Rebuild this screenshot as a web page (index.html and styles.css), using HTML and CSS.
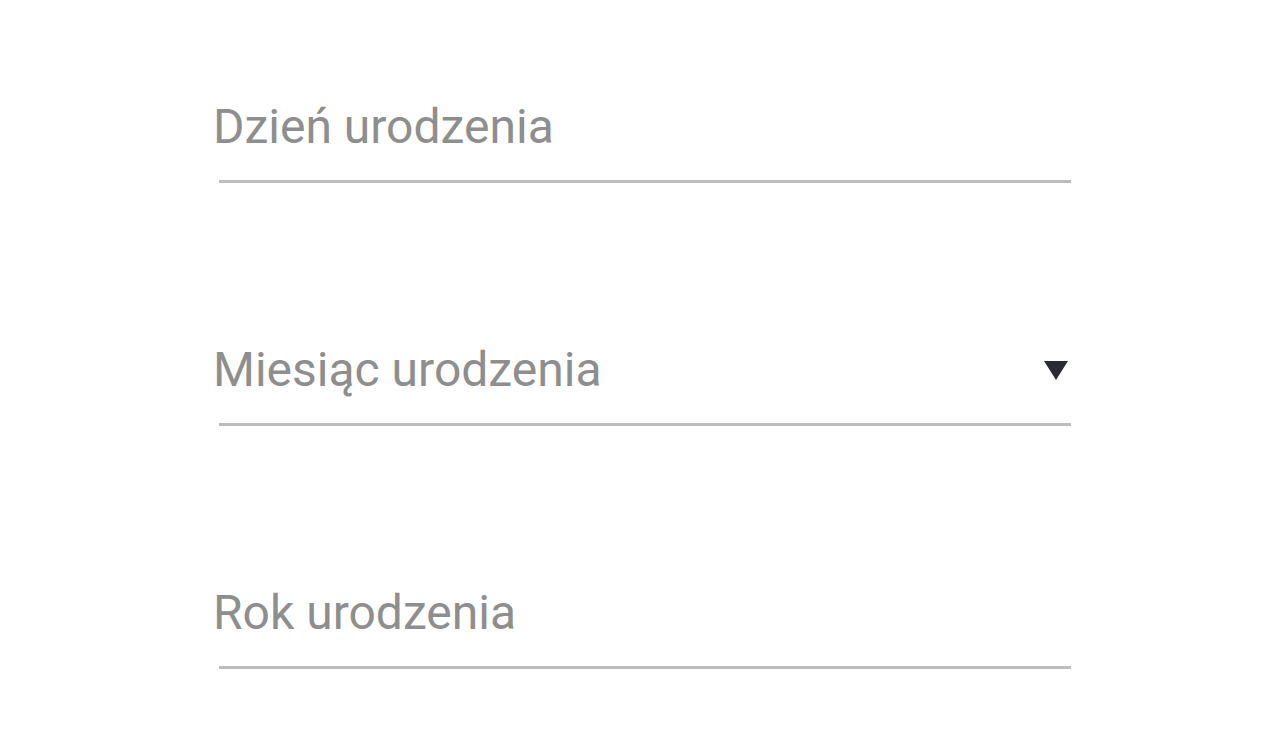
FILE: index.html
```html
<!DOCTYPE html>
<html lang="pl">
<head>
<meta charset="utf-8">
<title>Data urodzenia</title>
<link rel="stylesheet" href="styles.css">
</head>
<body>
<div class="form">
  <div class="field">
    <div class="row"><span class="label">Dzień urodzenia</span></div>
    <div class="underline"></div>
  </div>
  <div class="field">
    <div class="row">
      <span class="label">Miesiąc urodzenia</span>
      <svg class="arrow" width="24" height="19" viewBox="0 0 24 19"><polygon points="0,0 24,0 12,19" fill="#2b2c30"/></svg>
    </div>
    <div class="underline"></div>
  </div>
  <div class="field">
    <div class="row"><span class="label">Rok urodzenia</span></div>
    <div class="underline"></div>
  </div>
</div>
</body>
</html>
```
FILE: styles.css
```css
html, body {
  margin: 0;
  padding: 0;
  background: #ffffff;
}
.form {
  display: flex;
  flex-direction: column;
  gap: 160px;
  padding-top: 100px;
  padding-left: 213px;
  width: 858px;
}
.row {
  display: flex;
  justify-content: space-between;
  align-items: flex-start;
  height: 53px;
  padding-right: 3px;
}
.label {
  font-family: Roboto, "Noto Sans", sans-serif;
  font-size: 48px;
  line-height: 53px;
  color: #8e8e8e;
}
.arrow {
  margin-top: 18px;
}
.underline {
  margin-top: 27px;
  margin-left: 6px;
  height: 3px;
  background: #bdbdbd;
}
```
